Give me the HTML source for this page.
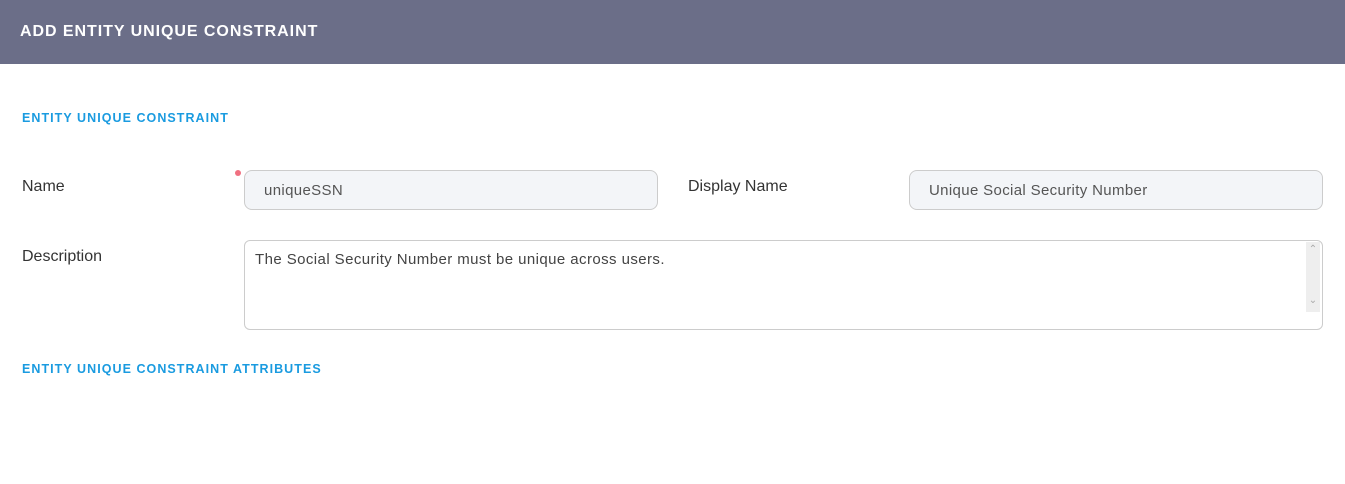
<!DOCTYPE html>
<html><head><style>
body{margin:0;width:1345px;height:484px;background:#fff;font-family:"Liberation Sans",sans-serif;position:relative;overflow:hidden}
.hdr{position:absolute;left:0;top:0;width:1345px;height:64px;background:#6b6e88}
.hdr span{position:absolute;left:20px;top:23px;color:#fff;font-weight:bold;font-size:16px;letter-spacing:0.95px}
.sec{position:absolute;left:22px;color:#1a9be0;font-weight:bold;font-size:12.5px;letter-spacing:1.05px}
.lbl{position:absolute;font-size:16px;color:#333}
.inp{position:absolute;box-sizing:border-box;border:1px solid #ccc;border-radius:8px;background:#f3f5f8;font-size:15px;color:#555;padding-left:19px;height:40px;line-height:40px;letter-spacing:0.35px}
.ta{position:absolute;left:244px;top:240px;width:1079px;height:90px;box-sizing:border-box;border:1px solid #ccc;border-radius:6px;background:#fff;font-size:15px;color:#444;padding:10px 10px;letter-spacing:0.42px}
.sb{position:absolute;right:2px;top:1px;width:14px;height:70px;background:#eee;color:#aaa;font-size:10px;text-align:center;letter-spacing:0}
</style></head><body>
<div class="hdr"><span>ADD ENTITY UNIQUE CONSTRAINT</span></div>
<div class="sec" style="top:111px">ENTITY UNIQUE CONSTRAINT</div>
<div class="lbl" style="left:22px;top:178px">Name</div>
<div style="position:absolute;left:235px;top:170px;width:6px;height:6px;border-radius:50%;background:#f07080"></div>
<div class="inp" style="left:244px;top:170px;width:414px">uniqueSSN</div>
<div class="lbl" style="left:688px;top:178px">Display Name</div>
<div class="inp" style="left:909px;top:170px;width:414px">Unique Social Security Number</div>
<div class="lbl" style="left:22px;top:248px">Description</div>
<div class="ta">The Social Security Number must be unique across users.<div class="sb"><div style="margin-top:2px">&#8963;</div><div style="margin-top:40px">&#8964;</div></div></div>
<div class="sec" style="top:362px">ENTITY UNIQUE CONSTRAINT ATTRIBUTES</div>
</body></html>
